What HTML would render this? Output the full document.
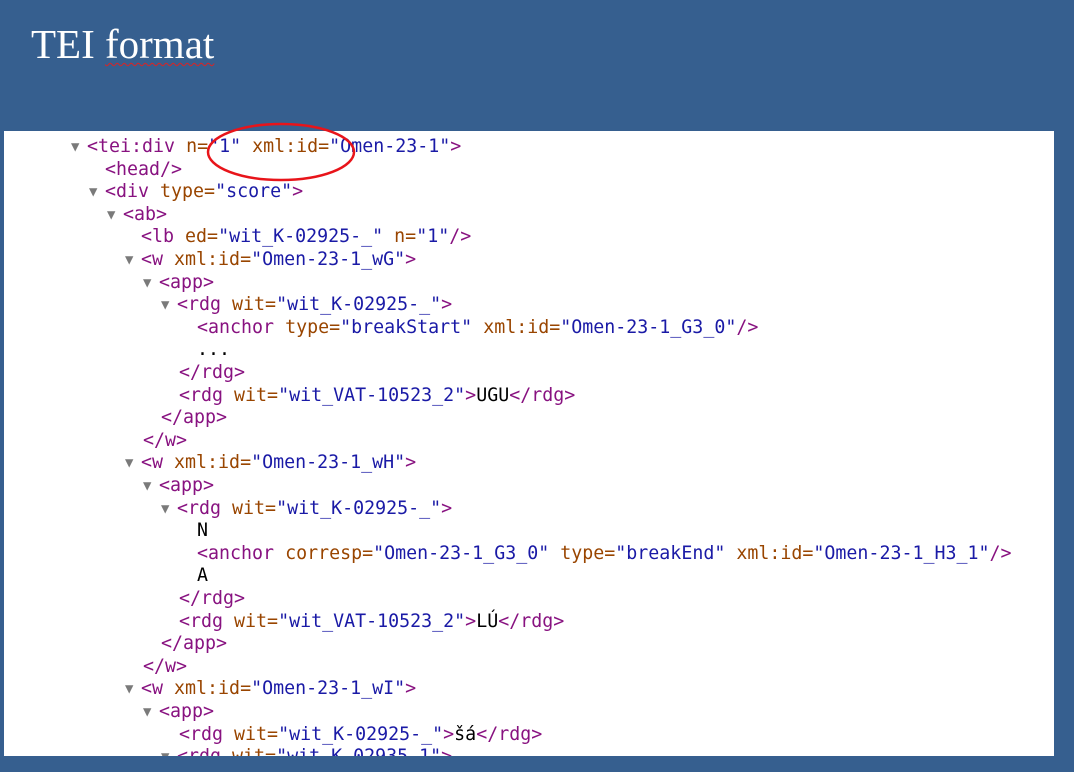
<!DOCTYPE html>
<html><head><meta charset="utf-8"><style>
body{margin:0;width:1074px;height:772px;background:#365f8f;position:relative;overflow:hidden}
.t{position:absolute;left:31px;top:20px;font:41px "Liberation Serif",serif;color:#fff;line-height:48px}
.t u{text-decoration:underline wavy #d22;text-decoration-thickness:1px;text-underline-offset:4px}
.p{position:absolute;left:4px;top:131px;width:1050px;height:625px;background:#fff;overflow:hidden}
.l{position:absolute;white-space:pre;font:18.3px "DejaVu Sans Mono",monospace;line-height:22px;color:#000}
.g{color:#881280}.a{color:#994500}.v{color:#1a1aa6}
.tr{position:absolute;color:#7a7a7a;font-size:14px;margin-left:-16px;margin-top:0px}
</style></head><body>
<div class="t">TEI <u>format</u></div>
<div class="p">
<div class="l" style="left:83px;top:5px"><span class="tr">▼</span><span class="g">&lt;tei:div </span><span class="a">n=</span><span class="v">"1"</span> <span class="a">xml:id=</span><span class="v">"Omen-23-1"</span><span class="g">&gt;</span></div>
<div class="l" style="left:101px;top:27.6px"><span class="g">&lt;head/&gt;</span></div>
<div class="l" style="left:101px;top:50.2px"><span class="tr">▼</span><span class="g">&lt;div </span><span class="a">type=</span><span class="v">"score"</span><span class="g">&gt;</span></div>
<div class="l" style="left:119px;top:72.8px"><span class="tr">▼</span><span class="g">&lt;ab&gt;</span></div>
<div class="l" style="left:137px;top:95.4px"><span class="g">&lt;lb </span><span class="a">ed=</span><span class="v">"wit_K-02925-_"</span> <span class="a">n=</span><span class="v">"1"</span><span class="g">/&gt;</span></div>
<div class="l" style="left:137px;top:118px"><span class="tr">▼</span><span class="g">&lt;w </span><span class="a">xml:id=</span><span class="v">"Omen-23-1_wG"</span><span class="g">&gt;</span></div>
<div class="l" style="left:155px;top:140.6px"><span class="tr">▼</span><span class="g">&lt;app&gt;</span></div>
<div class="l" style="left:173px;top:163.2px"><span class="tr">▼</span><span class="g">&lt;rdg </span><span class="a">wit=</span><span class="v">"wit_K-02925-_"</span><span class="g">&gt;</span></div>
<div class="l" style="left:193px;top:185.8px"><span class="g">&lt;anchor </span><span class="a">type=</span><span class="v">"breakStart"</span> <span class="a">xml:id=</span><span class="v">"Omen-23-1_G3_0"</span><span class="g">/&gt;</span></div>
<div class="l" style="left:193px;top:208.4px">...</div>
<div class="l" style="left:175px;top:231px"><span class="g">&lt;/rdg&gt;</span></div>
<div class="l" style="left:175px;top:253.6px"><span class="g">&lt;rdg </span><span class="a">wit=</span><span class="v">"wit_VAT-10523_2"</span><span class="g">&gt;</span>UGU<span class="g">&lt;/rdg&gt;</span></div>
<div class="l" style="left:157px;top:276.2px"><span class="g">&lt;/app&gt;</span></div>
<div class="l" style="left:139px;top:298.8px"><span class="g">&lt;/w&gt;</span></div>
<div class="l" style="left:137px;top:321.4px"><span class="tr">▼</span><span class="g">&lt;w </span><span class="a">xml:id=</span><span class="v">"Omen-23-1_wH"</span><span class="g">&gt;</span></div>
<div class="l" style="left:155px;top:344px"><span class="tr">▼</span><span class="g">&lt;app&gt;</span></div>
<div class="l" style="left:173px;top:366.6px"><span class="tr">▼</span><span class="g">&lt;rdg </span><span class="a">wit=</span><span class="v">"wit_K-02925-_"</span><span class="g">&gt;</span></div>
<div class="l" style="left:193px;top:389.2px">N</div>
<div class="l" style="left:193px;top:411.8px"><span class="g">&lt;anchor </span><span class="a">corresp=</span><span class="v">"Omen-23-1_G3_0"</span> <span class="a">type=</span><span class="v">"breakEnd"</span> <span class="a">xml:id=</span><span class="v">"Omen-23-1_H3_1"</span><span class="g">/&gt;</span></div>
<div class="l" style="left:193px;top:434.4px">A</div>
<div class="l" style="left:175px;top:457px"><span class="g">&lt;/rdg&gt;</span></div>
<div class="l" style="left:175px;top:479.6px"><span class="g">&lt;rdg </span><span class="a">wit=</span><span class="v">"wit_VAT-10523_2"</span><span class="g">&gt;</span>LÚ<span class="g">&lt;/rdg&gt;</span></div>
<div class="l" style="left:157px;top:502.2px"><span class="g">&lt;/app&gt;</span></div>
<div class="l" style="left:139px;top:524.8px"><span class="g">&lt;/w&gt;</span></div>
<div class="l" style="left:137px;top:547.4px"><span class="tr">▼</span><span class="g">&lt;w </span><span class="a">xml:id=</span><span class="v">"Omen-23-1_wI"</span><span class="g">&gt;</span></div>
<div class="l" style="left:155px;top:570px"><span class="tr">▼</span><span class="g">&lt;app&gt;</span></div>
<div class="l" style="left:175px;top:592.6px"><span class="g">&lt;rdg </span><span class="a">wit=</span><span class="v">"wit_K-02925-_"</span><span class="g">&gt;</span>šá<span class="g">&lt;/rdg&gt;</span></div>
<div class="l" style="left:173px;top:615.2px"><span class="tr">▼</span><span class="g">&lt;rdg </span><span class="a">wit=</span><span class="v">"wit_K-02935_1"</span><span class="g">&gt;</span></div>
</div>
<svg style="position:absolute;left:0;top:0" width="1074" height="772"><ellipse cx="281" cy="152" rx="73" ry="28" fill="none" stroke="#e8141a" stroke-width="2.5"/></svg>
</body></html>
